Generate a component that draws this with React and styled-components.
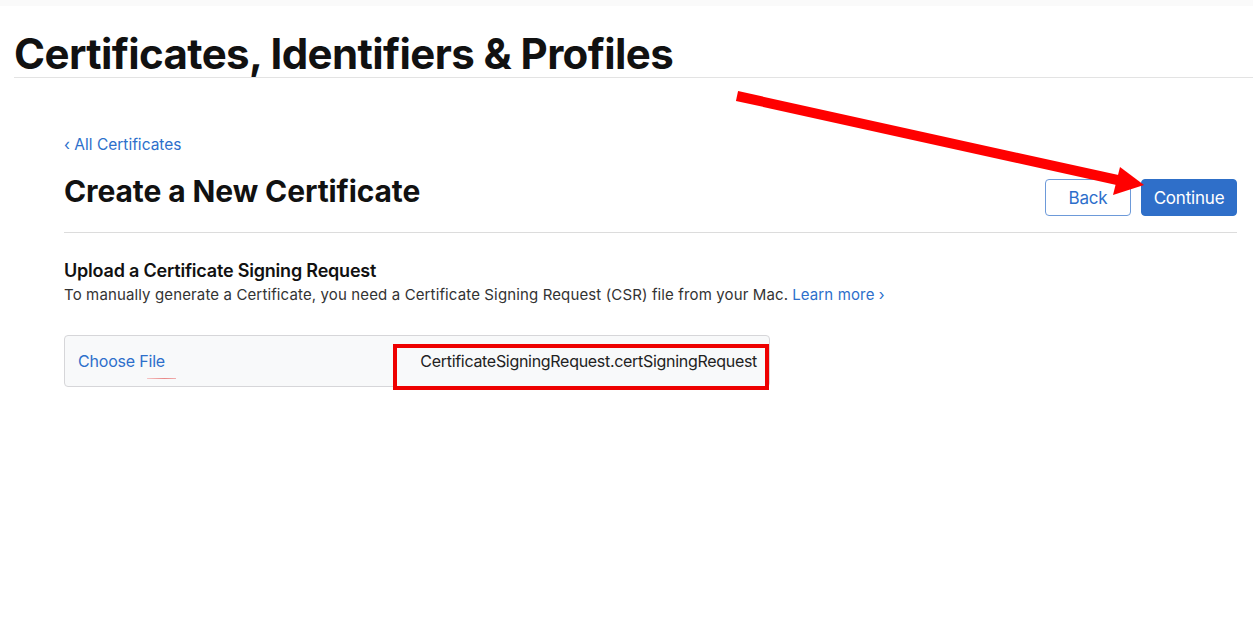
import React from "react";
import styled, { createGlobalStyle } from "styled-components";

const Global = createGlobalStyle`
  html, body { margin: 0; padding: 0; background: #fff; }
  body { font-family: Inter, "Noto Sans", "Liberation Sans", sans-serif; color: #1d1d1f; }
  * { box-sizing: border-box; }
`;

const Page = styled.div`
  position: relative;
  width: 1253px;
  height: 640px;
  overflow: hidden;
  background: #fff;
`;

const TopStrip = styled.div`
  height: 6px;
  background: #fafafa;
`;

const Header = styled.header`
  margin-left: 14px;
  height: 72px;
  border-bottom: 1px solid #e3e3e3;
  display: flex;
  align-items: flex-end;
`;

const Title = styled.h1`
  margin: 0 0 2px 0;
  font-size: 42px;
  font-weight: 700;
  letter-spacing: -0.6px;
  line-height: 42px;
  color: #111;
`;

const Main = styled.main`
  padding: 0 16px 0 64px;
`;

const BackLink = styled.a`
  display: block;
  margin-top: 57px;
  font-size: 15.5px;
  line-height: 20px;
  color: #2d6fcb;
  text-decoration: none;
`;

const TitleRow = styled.div`
  display: flex;
  align-items: flex-end;
  justify-content: space-between;
  padding: 18px 0 16px;
  border-bottom: 1px solid #dcdcdc;
`;

const PageTitle = styled.h2`
  margin: 0 0 7px 0;
  font-size: 30px;
  font-weight: 700;
  letter-spacing: -0.1px;
  line-height: 36px;
  color: #111;
`;

const Buttons = styled.div`
  display: flex;
  gap: 10px;
`;

const Button = styled.button`
  height: 37px;
  width: ${(p) => (p.$primary ? "96px" : "86px")};
  padding: 0;
  font-family: inherit;
  font-size: 17px;
  letter-spacing: -0.2px;
  border-radius: 4px;
  border: 1px solid ${(p) => (p.$primary ? "#2e6fc7" : "#6d9ad9")};
  background: ${(p) => (p.$primary ? "#2f6fc9" : "#fff")};
  color: ${(p) => (p.$primary ? "#fff" : "#2d6fcb")};
`;

const Section = styled.section`
  padding-top: 26px;
`;

const SectionTitle = styled.h3`
  margin: 0;
  font-size: 18px;
  font-weight: 600;
  letter-spacing: -0.2px;
  line-height: 24px;
  color: #111;
`;

const Desc = styled.p`
  margin: 1px 0 0;
  font-size: 15px;
  line-height: 22px;
  letter-spacing: 0.13px;
  color: #333;
`;

const Link = styled.a`
  color: #2d6fcb;
  text-decoration: none;
  margin-left: 4px;
`;

const FileBox = styled.div`
  position: relative;
  margin-top: 29px;
  width: 706px;
  height: 52px;
  background: #f8f9fa;
  border: 1px solid #d6d6d9;
  border-radius: 4px;
  display: flex;
  align-items: center;
  justify-content: space-between;
  padding: 0 12px 0 13px;
`;

const ChooseFile = styled.span`
  position: relative;
  font-size: 16px;
  color: #2d6fcb;
  letter-spacing: -0.2px;
`;

const Underline = styled.span`
  position: absolute;
  left: 69px;
  top: 27px;
  width: 29px;
  height: 1px;
  background: linear-gradient(90deg, #f5c6c6, #e98888 60%, #f0b0b0);
`;

const FileName = styled.span`
  font-size: 16px;
  color: #222;
  letter-spacing: -0.3px;
`;

const Highlight = styled.div`
  position: absolute;
  left: 328px;
  top: 8px;
  width: 376px;
  height: 46px;
  border: 4px solid #ee0000;
  pointer-events: none;
`;

const Overlay = styled.svg`
  position: absolute;
  left: 0;
  top: 0;
  pointer-events: none;
`;

export default function App() {
  return (
    <Page>
      <Global />
      <TopStrip />
      <Header>
        <Title>Certificates, Identifiers &amp; Profiles</Title>
      </Header>
      <Main>
        <BackLink href="#">‹ All Certificates</BackLink>
        <TitleRow>
          <PageTitle>Create a New Certificate</PageTitle>
          <Buttons>
            <Button>Back</Button>
            <Button $primary>Continue</Button>
          </Buttons>
        </TitleRow>
        <Section>
          <SectionTitle>Upload a Certificate Signing Request</SectionTitle>
          <Desc>
            To manually generate a Certificate, you need a Certificate Signing Request (CSR) file from your Mac.
            <Link href="#">Learn more ›</Link>
          </Desc>
          <FileBox>
            <ChooseFile>
              Choose File
              <Underline />
            </ChooseFile>
            <FileName>CertificateSigningRequest.certSigningRequest</FileName>
            <Highlight />
          </FileBox>
        </Section>
      </Main>
      <Overlay width="1253" height="640" viewBox="0 0 1253 640">
        <line x1="737" y1="96" x2="1122" y2="181" stroke="#ff0000" strokeWidth="10" />
        <polygon points="1144,185 1120,167 1113,195" fill="#ff0000" />
      </Overlay>
    </Page>
  );
}
